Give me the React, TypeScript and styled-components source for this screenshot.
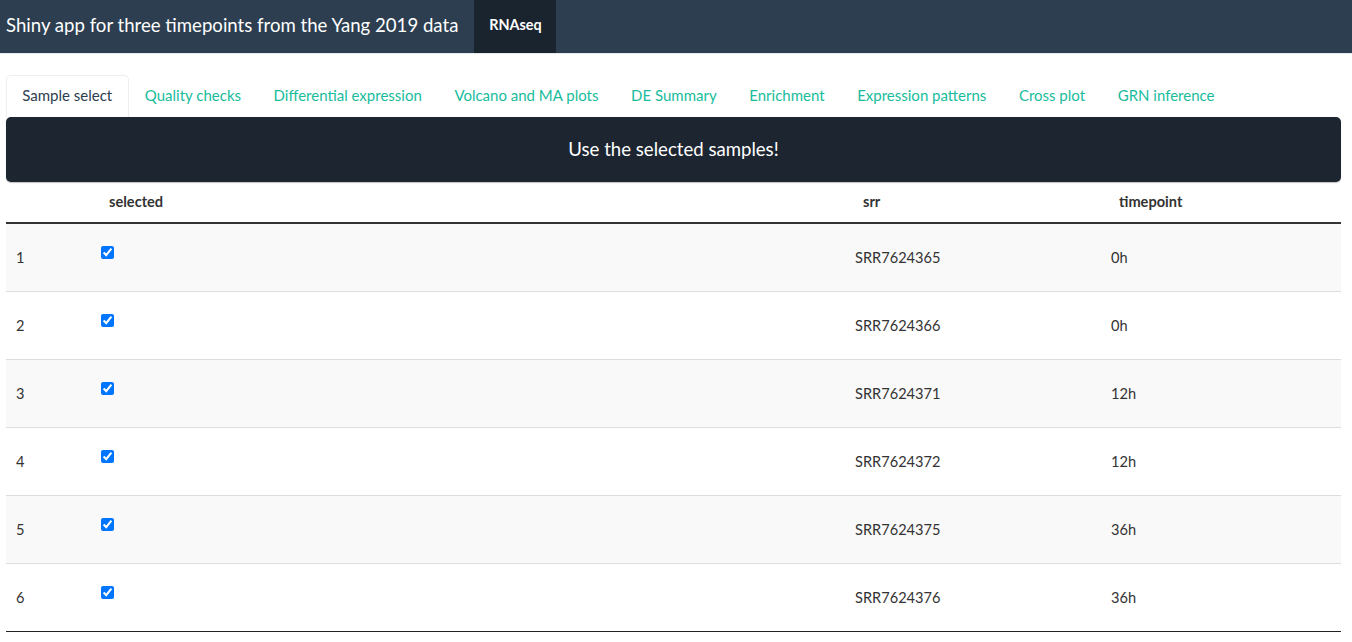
import React from 'react'
import styled, { createGlobalStyle } from 'styled-components'

const GlobalStyle = createGlobalStyle`
  html, body {
    margin: 0;
    padding: 0;
    background: #ffffff;
    font-family: Lato, "Open Sans", "Liberation Sans", sans-serif;
    color: #212529;
  }
  * { box-sizing: border-box; }
`

const samples = [
  { id: 1, srr: 'SRR7624365', timepoint: '0h' },
  { id: 2, srr: 'SRR7624366', timepoint: '0h' },
  { id: 3, srr: 'SRR7624371', timepoint: '12h' },
  { id: 4, srr: 'SRR7624372', timepoint: '12h' },
  { id: 5, srr: 'SRR7624375', timepoint: '36h' },
  { id: 6, srr: 'SRR7624376', timepoint: '36h' },
]

const tabs = [
  'Sample select',
  'Quality checks',
  'Differential expression',
  'Volcano and MA plots',
  'DE Summary',
  'Enrichment',
  'Expression patterns',
  'Cross plot',
  'GRN inference',
]

// top bar
const Navbar = styled.nav`
  height: 54px;
  background: #2c3e50;
  border-bottom: 1px solid #e6e9eb;
  display: flex;
  align-items: stretch;
  padding-left: 6px;
`

const Brand = styled.div`
  display: flex;
  align-items: center;
  color: #ffffff;
  font-size: 18.6px;
  padding-right: 16px;
  padding-bottom: 4px;
`

const NavItem = styled.div<{ $active?: boolean }>`
  display: flex;
  align-items: center;
  width: 82px;
  justify-content: center;
  padding-bottom: 4px;
  background: ${p => (p.$active ? '#1a242f' : 'transparent')};
  color: #ffffff;
  font-size: 14.4px;
  font-weight: 700;
`

const Page = styled.main`
  padding: 21px 11px 0 6px;
`

const TabBar = styled.ul`
  list-style: none;
  margin: 0;
  padding: 0;
  display: flex;
  height: 42px;
`

const Tab = styled.li<{ $active?: boolean }>`
  display: flex;
  align-items: center;
  padding: 0 15.3px 3px;
  font-size: 15px;
  color: ${p => (p.$active ? '#2c3e50' : '#18bc9c')};
  background: ${p => (p.$active ? '#ffffff' : 'transparent')};
  border: 1px solid ${p => (p.$active ? '#eeeeee' : 'transparent')};
  border-bottom: none;
  border-radius: 5px 5px 0 0;
`

const UseButton = styled.button`
  display: block;
  width: 100%;
  height: 65px;
  border: none;
  border-radius: 5px;
  background: #1c2530;
  color: #ffffff;
  font-family: inherit;
  font-size: 18.6px;
  padding: 0 0 2px;
  box-shadow: 0 1px 1px rgba(0, 0, 0, 0.25);
`

const Table = styled.table`
  width: 100%;
  border-collapse: collapse;
  table-layout: fixed;
  font-size: 14.6px;
  color: #333333;
  border-bottom: 1px solid #222222;

  tbody tr + tr td {
    border-top: 1px solid #dddddd;
  }
`

const HeadCell = styled.th<{ $w: number }>`
  width: ${p => p.$w}px;
  text-align: left;
  font-weight: 700;
  padding: 10px 18px 11px;
  border-bottom: 2px solid #333333;
  height: 41px;
`

const Row = styled.tr<{ $odd: boolean }>`
  background: ${p => (p.$odd ? '#f9f9f9' : '#ffffff')};
`

const Cell = styled.td`
  height: 68px;
  padding: 8px 10px;
  vertical-align: middle;
`

const CheckCell = styled.td`
  height: 68px;
  padding: 15px 10px 0;
  vertical-align: top;
`

const Check = styled.input`
  margin: 7px 0 0;
  width: 13px;
  height: 13px;
  display: block;
`

export default function App() {
  return (
    <>
      <GlobalStyle />
      <Navbar>
        <Brand>Shiny app for three timepoints from the Yang 2019 data</Brand>
        <NavItem $active>RNAseq</NavItem>
      </Navbar>
      <Page>
        <TabBar>
          {tabs.map((t, i) => (
            <Tab key={t} $active={i === 0}>
              {t}
            </Tab>
          ))}
        </TabBar>
        <UseButton>Use the selected samples!</UseButton>
        <Table>
          <thead>
            <tr>
              <HeadCell $w={85}></HeadCell>
              <HeadCell $w={754}>selected</HeadCell>
              <HeadCell $w={256}>srr</HeadCell>
              <HeadCell $w={240}>timepoint</HeadCell>
            </tr>
          </thead>
          <tbody>
            {samples.map((s, i) => (
              <Row key={s.id} $odd={i % 2 === 0}>
                <Cell>{s.id}</Cell>
                <CheckCell>
                  <Check type="checkbox" checked readOnly />
                </CheckCell>
                <Cell>{s.srr}</Cell>
                <Cell>{s.timepoint}</Cell>
              </Row>
            ))}
          </tbody>
        </Table>
      </Page>
    </>
  )
}
